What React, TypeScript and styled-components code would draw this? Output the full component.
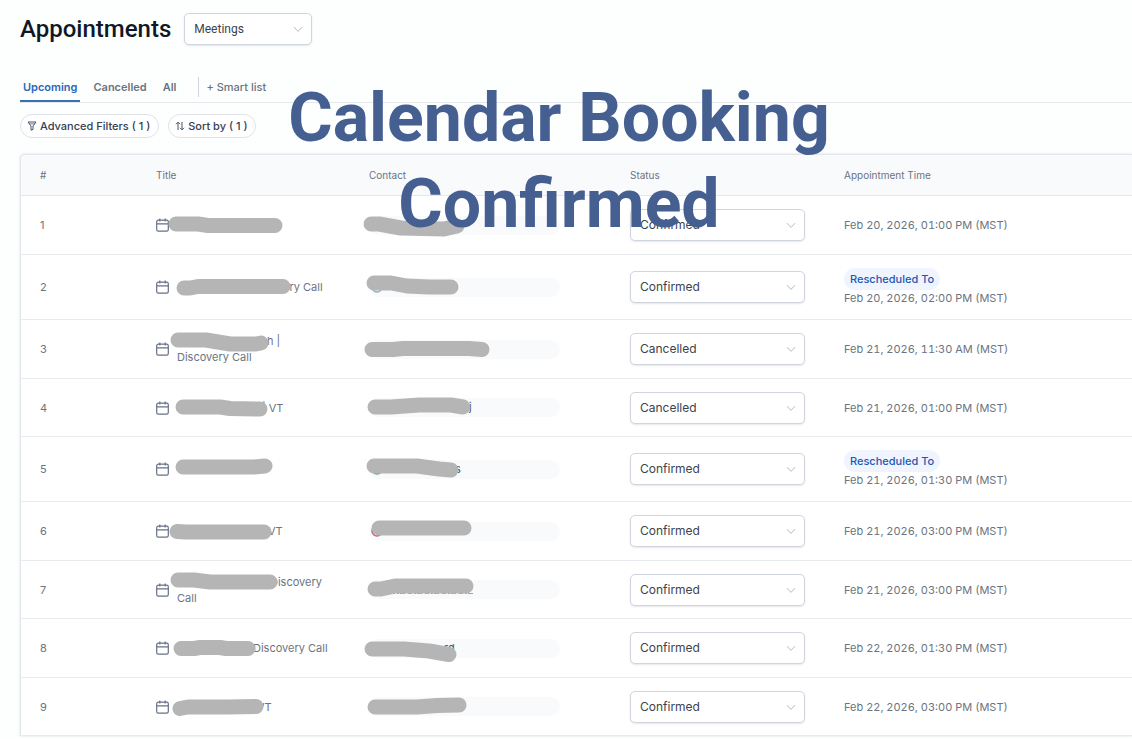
import React from 'react';
import styled, { createGlobalStyle } from 'styled-components';

const GlobalStyle = createGlobalStyle`
  * { box-sizing: border-box; }
  body {
    margin: 0;
    background: #fdfefe;
    color: #6b7480;
    font-family: Inter, "Liberation Sans", sans-serif;
    font-size: 11px;
    line-height: 16px;
  }
  button, select { font: inherit; color: inherit; }
`;

const Page = styled.main`
  position: relative;
  min-height: 100vh;
  padding: 13px 0 0 20px;
  overflow: hidden;
`;

const Header = styled.header`
  display: flex;
  align-items: center;
  gap: 13px;
  height: 32px;
`;

const Heading = styled.h1`
  margin: 0;
  color: #101828;
  font: 500 24px/32px Roboto, sans-serif;
`;

const SelectBox = styled.label<{ $width: number }>`
  position: relative;
  display: block;
  width: ${(p) => p.$width}px;
  color: #3c434d;

  svg {
    position: absolute;
    right: 9px;
    top: 13px;
    pointer-events: none;
  }
`;

const Select = styled.select<{ $family?: string }>`
  display: block;
  appearance: none;
  width: 100%;
  height: 32px;
  padding: 0 24px 0 9px;
  border: 1px solid #d0d5dd;
  border-radius: 5px;
  background: #fff;
  box-shadow: 0 1px 2px rgba(16, 24, 40, 0.1);
  font-size: 12px;
  font-family: ${(p) => p.$family ?? 'inherit'};
`;

const Tabs = styled.nav`
  display: flex;
  height: 30px;
  margin-top: 28px;
  border-bottom: 1px solid #e4e7ec;
`;

const Tab = styled.button<{ $active?: boolean }>`
  height: 29px;
  margin-right: 10px;
  padding: 0 3px;
  border: 0;
  border-bottom: 2px solid ${(p) => (p.$active ? '#3b6fb4' : 'transparent')};
  background: none;
  font-weight: 600;
  color: ${(p) => (p.$active ? '#2f66b8' : '#6b7480')};
`;

const SmartList = styled.button`
  height: 20px;
  margin: 4px 0 0 9px;
  padding: 0 0 0 7px;
  border: 0;
  border-left: 1px solid #d0d5dd;
  background: none;
  font-weight: 500;
`;

const Filters = styled.div`
  display: flex;
  gap: 9px;
  margin-top: 11px;
`;

const Pill = styled.button`
  display: flex;
  align-items: center;
  gap: 3px;
  height: 24px;
  padding: 0 8px 0 6px;
  border: 1px solid #dfe2e8;
  border-radius: 12px;
  background: #fff;
  color: #344054;
  font-weight: 500;
`;

const TableFrame = styled.section`
  margin-top: 16px;
  border: 1px solid #e4e7ec;
  border-width: 1px 0 0 1px;
  border-radius: 5px 0 0 0;
  background: #fff;
  box-shadow: 0 0 2px rgba(16, 24, 40, 0.2);
  overflow: hidden;
`;

const Table = styled.table`
  width: 100%;
  border-collapse: separate;
  border-spacing: 0;
  table-layout: fixed;
`;

const Col = styled.col<{ $width?: number }>`
  width: ${(p) => (p.$width ? `${p.$width}px` : 'auto')};
`;

const HeadCell = styled.th`
  height: 41px;
  padding: 0 19px;
  border-bottom: 1px solid #e4e7ec;
  background: #f9fafc;
  text-align: left;
  font-size: 10px;
  font-weight: 400;
`;

const Cell = styled.td<{ $height: number }>`
  height: ${(p) => p.$height}px;
  padding: 0 19px;
  border-bottom: 1px solid #e9ebef;
  vertical-align: middle;
  white-space: nowrap;
`;

const TitleBlock = styled.div`
  position: relative;
  display: flex;
  align-items: center;
  gap: 8px;
`;

const TitleLine = styled.span<{ $indent: number }>`
  display: block;
  min-height: 16px;
  padding-left: ${(p) => p.$indent}px;
`;

const Chip = styled.div<{ $indent: number }>`
  position: relative;
  width: 191px;
  height: 19px;
  padding-left: ${(p) => p.$indent}px;
  border-radius: 10px;
  background: #f9fafc;
  color: #475467;
  line-height: 19px;
`;

const Marker = styled.svg`
  position: absolute;
  left: 0;
  top: 50%;
  width: 1px;
  height: 1px;
  overflow: visible;
`;

const Badge = styled.span`
  padding: 0 6px;
  border-radius: 11px;
  background: #eff4ff;
  color: #2457b0;
  font-weight: 500;
  line-height: 22px;
`;

const Time = styled.div`
  display: flex;
  flex-direction: column;
  align-items: flex-start;
  font-variant-numeric: tabular-nums;
`;

const Caption = styled.p`
  position: absolute;
  top: 75px;
  left: 0;
  right: 14px;
  margin: 0;
  color: #455f91;
  font: 700 68px/86px Roboto, sans-serif;
  text-align: center;
  pointer-events: none;
`;

const Chevron = () => (
  <svg width="10" height="7" viewBox="0 0 10 7" fill="none" stroke="#b4bac4" aria-hidden="true">
    <path d="M1 1.2 5 5.4 9 1.2" />
  </svg>
);

const CalendarIcon = () => (
  <svg width="13" height="14" viewBox="0 0 13 14" fill="none" stroke="#667085" strokeWidth="1.2" aria-hidden="true">
    <rect x="0.7" y="2.2" width="11.6" height="11" rx="1.6" />
    <path d="M0.7 5.8h11.6M3.8 0.4v3M9.2 0.4v3" />
  </svg>
);

const FilterIcon = () => (
  <svg width="10" height="10" viewBox="0 0 10 10" fill="none" stroke="#475467" strokeLinejoin="round" aria-hidden="true">
    <path d="M1 1h8L6 5v3.4L4 9.2V5Z" />
    <path d="M2.2 2.8h5.6" strokeWidth="0.7" />
  </svg>
);

const SortIcon = () => (
  <svg width="10" height="10" viewBox="0 0 10 10" fill="none" stroke="#475467" aria-hidden="true">
    <path d="M3 9V1.2M1 3.2l2-2 2 2M7 1v7.8M5 6.8l2 2 2-2" />
  </svg>
);

interface Line { indent: number; text: string }
interface Row {
  height: number;
  lines: Line[];
  titleMark: string;
  contact?: Line;
  contactMark: string;
  dot?: string;
  trace?: string;
  status: 'Confirmed' | 'Cancelled';
  moved?: boolean;
  time: string;
}

const rows: Row[] = [
  { height: 59, lines: [], titleMark: 'M20-1H42L52 .5H119', contactMark: 'M2-1H10L32 3L75 4L88 1', status: 'Confirmed', time: 'Feb 20, 2026, 01:00 PM (MST)' },
  { height: 65, lines: [{ indent: 71, text: 'Discovery Call' }], titleMark: 'M28 1H34L42-.5H127', contactMark: 'M5-4H22L38-1L60 0H82', dot: '#7fb3cc', status: 'Confirmed', moved: true, time: 'Feb 20, 2026, 02:00 PM (MST)' },
  { height: 59, lines: [{ indent: 90, text: 'h |' }, { indent: 0, text: 'Discovery Call' }], titleMark: 'M22-9H50L74-5H100L105-6', contactMark: 'M3 .5H24L34-.5H100L113 .5', status: 'Cancelled', time: 'Feb 21, 2026, 11:30 AM (MST)' },
  { height: 58, lines: [{ indent: 85, text: '| VT' }], titleMark: 'M27-1H64L74 .5L104 1', contact: { indent: 100, text: 'j' }, contactMark: 'M6-1H22L50-3H82L94-1', status: 'Cancelled', time: 'Feb 21, 2026, 01:00 PM (MST)' },
  { height: 65, lines: [], titleMark: 'M27-2H98L109-3', contact: { indent: 86, text: 's' }, contactMark: 'M5-3H48L70 0L82 1', dot: '#5fa873', status: 'Confirmed', moved: true, time: 'Feb 21, 2026, 01:30 PM (MST)' },
  { height: 59, lines: [{ indent: 91, text: 'VT' }], titleMark: 'M21 .5L30 1H108', contactMark: 'M10-3H95', dot: '#c9677b', status: 'Confirmed', time: 'Feb 21, 2026, 03:00 PM (MST)' },
  { height: 58, lines: [{ indent: 93, text: 'Discovery' }, { indent: 0, text: 'Call' }], titleMark: 'M22-10H38L54-8H114', contactMark: 'M6-1H12L26-4H97', trace: 'M22 3.5H104', status: 'Confirmed', time: 'Feb 21, 2026, 03:00 PM (MST)' },
  { height: 59, lines: [{ indent: 76, text: 'Discovery Call' }], titleMark: 'M25 .5H38L44-.5H64L70 .5H92', contact: { indent: 75, text: 'rd' }, contactMark: 'M3 1H35L60 3L80 6.5', status: 'Confirmed', time: 'Feb 22, 2026, 01:30 PM (MST)' },
  { height: 58, lines: [{ indent: 80, text: 'VT' }], titleMark: 'M24 1.5L32 0H72L100-.5', contactMark: 'M6 0H48L68-1.5L90-2', status: 'Confirmed', time: 'Feb 22, 2026, 03:00 PM (MST)' },
];

const Redaction = ({ d, dot, trace }: { d: string; dot?: string; trace?: string }) => (
  <Marker aria-hidden="true" fill="none">
    {dot && <circle cx="8" cy="0" r="5" stroke={dot} strokeWidth="1.6" />}
    {trace && <path d={trace} stroke="#9aa2ad" strokeDasharray="4 2 2 1 5 3" />}
    <path d={d} stroke="#b5b5b5" strokeWidth="15" strokeLinecap="round" strokeLinejoin="round" />
  </Marker>
);

export default function App() {
  return (
    <>
      <GlobalStyle />
      <Page>
        <Header>
          <Heading>Appointments</Heading>
          <SelectBox $width={128}>
            <Select aria-label="Appointment type" $family="Roboto, sans-serif">
              <option>Meetings</option>
            </Select>
            <Chevron />
          </SelectBox>
        </Header>
        <Tabs aria-label="Lists">
          <Tab $active>Upcoming</Tab>
          <Tab>Cancelled</Tab>
          <Tab>All</Tab>
          <SmartList>+ Smart list</SmartList>
        </Tabs>
        <Filters>
          <Pill><FilterIcon />Advanced Filters ( 1 )</Pill>
          <Pill><SortIcon />Sort by ( 1 )</Pill>
        </Filters>
        <TableFrame>
          <Table>
            <colgroup>
              <Col $width={116} />
              <Col $width={213} />
              <Col $width={261} />
              <Col $width={214} />
              <Col />
            </colgroup>
            <thead>
              <tr>
                {['#', 'Title', 'Contact', 'Status', 'Appointment Time'].map((name) => (
                  <HeadCell key={name} scope="col">{name}</HeadCell>
                ))}
              </tr>
            </thead>
            <tbody>
              {rows.map((row, i) => (
                <tr key={i}>
                  <Cell $height={row.height}>{i + 1}</Cell>
                  <Cell $height={row.height}>
                    <TitleBlock>
                      <CalendarIcon />
                      <div>
                        {row.lines.map((line) => (
                          <TitleLine key={line.text} $indent={line.indent}>{line.text}</TitleLine>
                        ))}
                      </div>
                      <Redaction d={row.titleMark} />
                    </TitleBlock>
                  </Cell>
                  <Cell $height={row.height}>
                    <Chip $indent={row.contact?.indent ?? 0}>
                      {row.contact?.text}
                      <Redaction d={row.contactMark} dot={row.dot} trace={row.trace} />
                    </Chip>
                  </Cell>
                  <Cell $height={row.height}>
                    <SelectBox $width={175}>
                      <Select aria-label={`Status of appointment ${i + 1}`} defaultValue={row.status}>
                        <option>Confirmed</option>
                        <option>Cancelled</option>
                      </Select>
                      <Chevron />
                    </SelectBox>
                  </Cell>
                  <Cell $height={row.height}>
                    <Time>
                      {row.moved && <Badge>Rescheduled To</Badge>}
                      <span>{row.time}</span>
                    </Time>
                  </Cell>
                </tr>
              ))}
            </tbody>
          </Table>
        </TableFrame>
        <Caption>Calendar Booking<br />Confirmed</Caption>
      </Page>
    </>
  );
}
